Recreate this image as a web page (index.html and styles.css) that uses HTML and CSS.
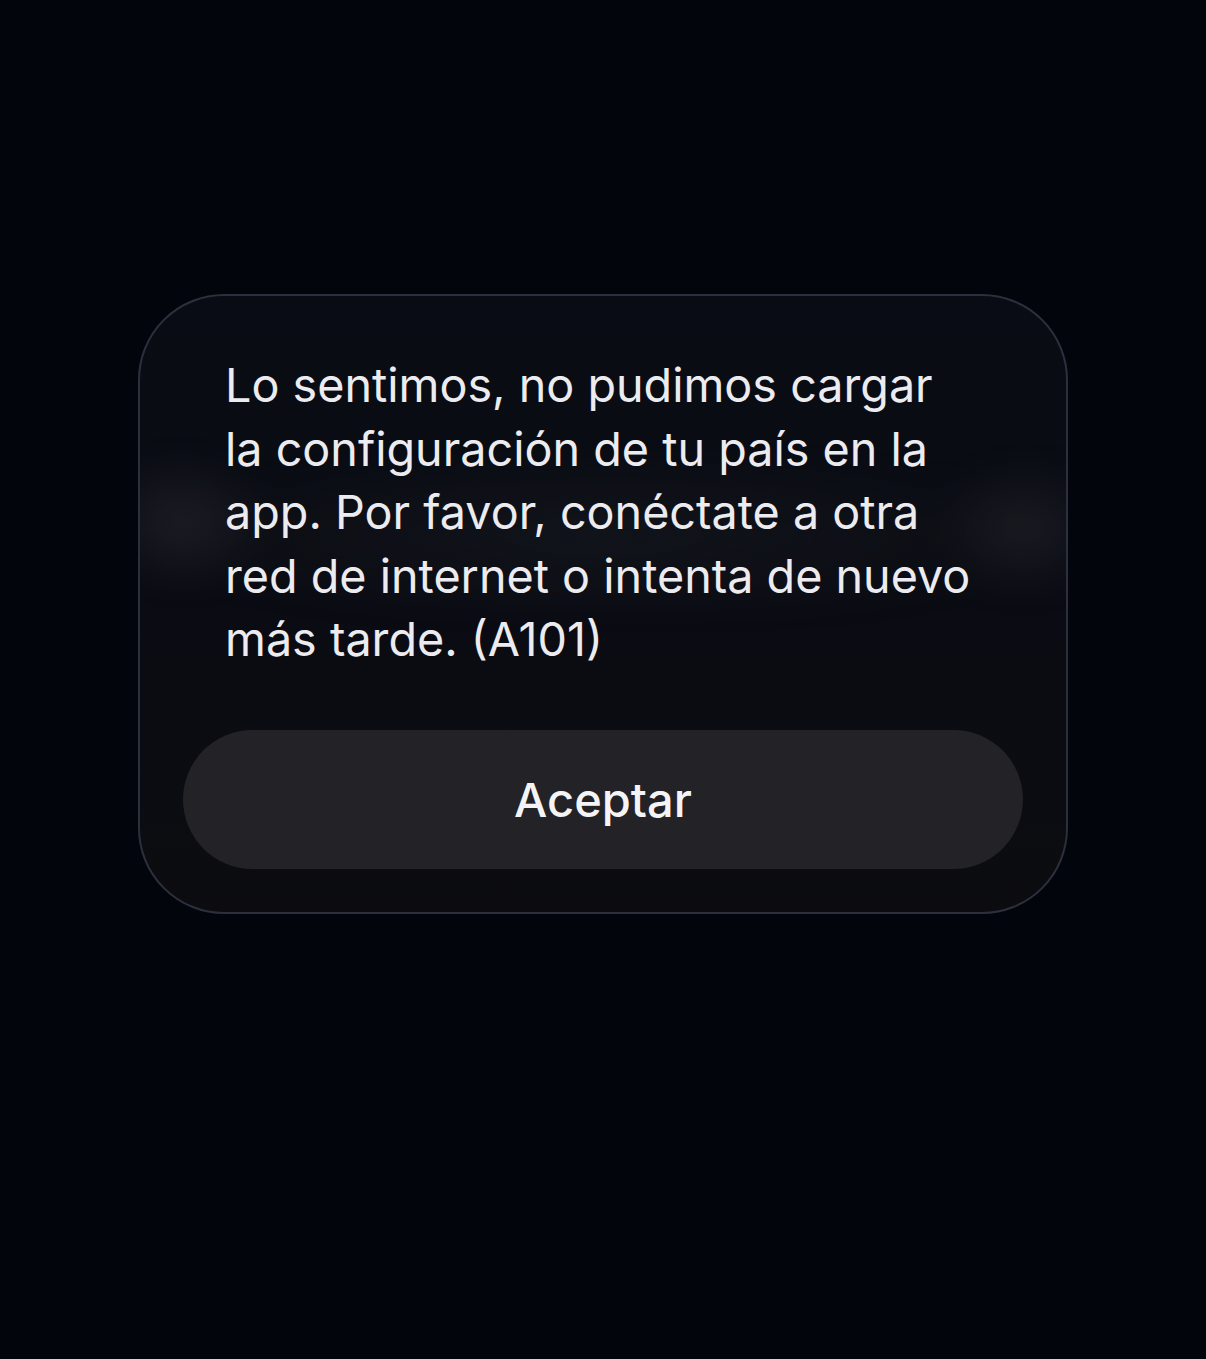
FILE: index.html
```html
<!DOCTYPE html>
<html lang="es">
<head>
<meta charset="utf-8">
<title>Alerta</title>
<link rel="stylesheet" href="styles.css">
</head>
<body>
<main class="screen">
  <section class="dialog" role="alertdialog">
    <div class="ghost" aria-hidden="true"></div>
    <p class="message">Lo sentimos, no pudimos cargar<br>la configuración de tu país en la<br>app. Por favor, conéctate a otra<br>red de internet o intenta de nuevo<br>más tarde. (A101)</p>
    <button class="accept" type="button">Aceptar</button>
  </section>
</main>
</body>
</html>
```
FILE: styles.css
```css
html, body {
  margin: 0;
  padding: 0;
  background: #03050c;
}
body {
  width: 1206px;
  height: 1359px;
  overflow: hidden;
  font-family: Inter, "Noto Sans", "Liberation Sans", sans-serif;
}
.screen {
  width: 1206px;
  height: 1359px;
  display: flex;
  justify-content: flex-start;
  align-items: flex-start;
  box-sizing: border-box;
  padding: 294px 0 0 138px;
}
.dialog {
  position: relative;
  overflow: hidden;
  width: 930px;
  box-sizing: border-box;
  border: 2px solid #2c303d;
  border-radius: 86px;
  background: linear-gradient(180deg, #0a0c15 0%, #0b0c13 55%, #0c0c10 100%);
  padding: 58px 43px 43px 43px;
  display: flex;
  flex-direction: column;
}
.ghost {
  position: absolute;
  left: -20px;
  right: -20px;
  top: 165px;
  height: 150px;
  background:
    radial-gradient(ellipse 90px 70px at 60px 40%, rgba(60,60,66,0.35), rgba(60,60,66,0) 100%),
    radial-gradient(ellipse 90px 70px at calc(100% - 60px) 45%, rgba(60,60,66,0.3), rgba(60,60,66,0) 100%),
    radial-gradient(ellipse 50% 60% at 50% 50%, rgba(55,55,62,0.18), rgba(55,55,62,0) 100%);
  filter: blur(14px);
  pointer-events: none;
}
.message {
  position: relative;
  margin: 0 0 0 42px;
  color: #ececf0;
  font-size: 46.7px;
  line-height: 63.5px;
  font-weight: 400;
  white-space: nowrap;
}
.accept {
  position: relative;
  margin-top: 58px;
  height: 139px;
  width: 100%;
  border: none;
  border-radius: 70px;
  background: #222227;
  color: #f4f4f6;
  font-family: Inter, "Noto Sans", "Liberation Sans", sans-serif;
  font-size: 47px;
  font-weight: 500;
  padding: 0;
}
```
